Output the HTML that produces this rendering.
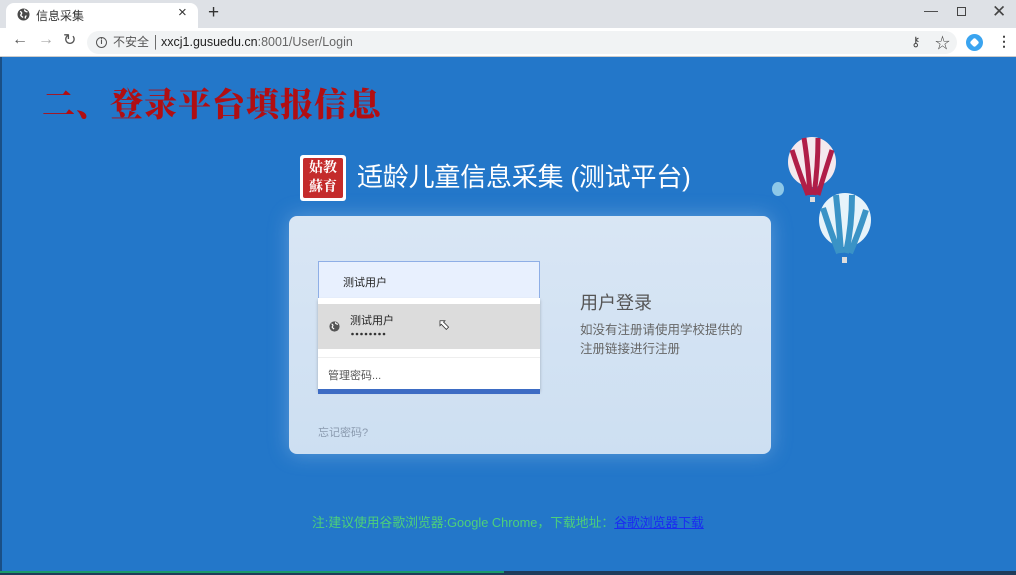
<!DOCTYPE html>
<html><head><meta charset="utf-8"><style>
*{margin:0;padding:0;box-sizing:border-box}
body{width:1016px;height:575px;overflow:hidden;position:relative;font-family:"Liberation Sans","Noto Sans CJK SC",sans-serif;background:#2377c9}
.abs{position:absolute}
</style></head><body>
<!-- tab strip -->
<div class="abs" style="left:0;top:0;width:1016px;height:28px;background:#dee1e6"></div>
<div class="abs" style="left:6px;top:3px;width:192px;height:26px;background:#fff;border-radius:8px 8px 0 0"></div>
<svg class="abs" style="left:17px;top:8px" width="13" height="13" viewBox="0 0 13 13"><circle cx="6.5" cy="6.5" r="6" fill="#4a4a4a"/><path d="M3 3.5c2 .5 2 2 1 3s1 2 2 3M8 1.5c-1 1.5 1 2 2.5 2.5M9.5 8c-1 0-1.5 1-1 2.5" stroke="#fff" stroke-width="1.4" fill="none"/></svg>
<div class="abs" style="left:36px;top:7px;font-size:12px;color:#333">信息采集</div>
<div class="abs" style="left:178px;top:4px;font-size:15px;color:#333">×</div>
<div class="abs" style="left:208px;top:2px;font-size:19px;color:#333">+</div>
<div class="abs" style="left:924px;top:2px;font-size:14px;color:#444">—</div>
<div class="abs" style="left:957px;top:7px;width:9px;height:9px;border:1px solid #444"></div>
<div class="abs" style="left:992px;top:2px;font-size:17px;color:#444">✕</div>
<!-- address bar -->
<div class="abs" style="left:0;top:28px;width:1016px;height:29px;background:#fff;border-bottom:1px solid #ccc"></div>
<div class="abs" style="left:12px;top:31px;font-size:16px;color:#555">←</div>
<div class="abs" style="left:38px;top:31px;font-size:16px;color:#aaa">→</div>
<div class="abs" style="left:63px;top:30px;font-size:16px;color:#555">↻</div>
<div class="abs" style="left:87px;top:31px;width:870px;height:23px;background:#f1f3f4;border-radius:12px"></div>
<div class="abs" style="left:96px;top:37px;width:11px;height:11px;border:1.3px solid #555;border-radius:50%;font-size:8px;line-height:8px;text-align:center;color:#555;font-weight:bold">i</div>
<div class="abs" style="left:113px;top:34px;font-size:12px;line-height:16px;color:#555;white-space:nowrap">不安全 │</div>
<div class="abs" style="left:161px;top:34px;font-size:12.5px;line-height:16px;color:#222">xxcj1.gusuedu.cn<span style="color:#666">:8001/User/Login</span></div>
<div class="abs" style="left:911px;top:34px;font-size:13px;color:#444">⚷</div>
<div class="abs" style="left:935px;top:32px;font-size:15px;color:#444">☆</div>
<div class="abs" style="left:966px;top:34px;width:17px;height:17px;border-radius:50%;background:#3aa4f0"><div style="margin:5px;width:7px;height:7px;background:#fff;border-radius:2px;transform:rotate(45deg)"></div></div>
<div class="abs" style="left:997px;top:33px;font-size:14px;color:#444;font-weight:bold">⋮</div>
<!-- page -->
<div class="abs" style="left:0;top:57px;width:2px;height:518px;background:#1a4f85"></div>
<div class="abs" style="left:0;top:571px;width:1016px;height:4px;background:#1e3b5a"></div>
<div class="abs" style="left:0;top:571px;width:504px;height:2px;background:#1a9a6a"></div>
<div class="abs" style="left:42px;top:84px;font-family:'Noto Serif CJK SC',serif;font-weight:900;font-size:33px;letter-spacing:1px;color:#b10e12;white-space:nowrap;line-height:38px">二、登录平台填报信息</div>
<!-- logo -->
<div class="abs" style="left:300px;top:155px;width:46px;height:46px;background:#fff;border-radius:3px;padding:3px"><div style="width:40px;height:40px;background:#c42b2b;border-radius:2px;color:#fff;font-family:'Noto Serif CJK SC',serif;font-size:14px;line-height:19px;text-align:center;font-weight:bold">姑教<br>蘇育</div></div>
<div class="abs" style="left:357px;top:160px;font-size:26px;color:#fff;white-space:nowrap;line-height:34px;letter-spacing:-0.2px">适龄儿童信息采集 (测试平台)</div>
<!-- balloons -->
<svg class="abs" style="left:770px;top:135px" width="110" height="135" viewBox="0 0 110 135">
<ellipse cx="42" cy="27" rx="24" ry="25" fill="#f4e9ee"/><path d="M22 15q8 25 16 45M34 3q4 25 6 57M48 3q0 28-4 57M62 15q-8 25-14 45" stroke="#b01e48" stroke-width="5" fill="none"/><rect x="40" y="62" width="5" height="5" fill="#ddd"/>
<ellipse cx="75" cy="85" rx="26" ry="27" fill="#e7f3fa"/><path d="M53 73q8 25 16 45M66 60q3 28 5 58M82 60q0 30-6 58M96 75q-8 25-16 43" stroke="#3a93c6" stroke-width="6" fill="none"/><rect x="72" y="122" width="5" height="6" fill="#ddd"/>
<ellipse cx="8" cy="54" rx="6" ry="7" fill="#8dc8e8"/>
</svg>
<!-- card -->
<div class="abs" style="left:289px;top:216px;width:482px;height:238px;border-radius:8px;background:linear-gradient(180deg,#d9e6f4,#cddff2);box-shadow:0 0 20px rgba(200,220,245,.35)"></div>
<div class="abs" style="left:318px;top:261px;width:222px;height:38px;background:#e8f0fe;border:1px solid #8eaee6"></div>
<div class="abs" style="left:343px;top:274px;font-size:11px;color:#222">测试用户</div>
<div class="abs" style="left:318px;top:298px;width:222px;height:92px;background:#fff;box-shadow:0 2px 3px rgba(0,0,0,.25)"></div>
<div class="abs" style="left:318px;top:304px;width:222px;height:45px;background:#dcdcdc"></div>
<svg class="abs" style="left:329px;top:321px" width="11" height="11" viewBox="0 0 13 13"><circle cx="6.5" cy="6.5" r="6" fill="#555"/><path d="M3 3.5c2 .5 2 2 1 3s1 2 2 3M8 1.5c-1 1.5 1 2 2.5 2.5" stroke="#fff" stroke-width="1.4" fill="none"/></svg>
<div class="abs" style="left:350px;top:312px;font-size:11px;color:#222">测试用户</div>
<svg class="abs" style="left:351px;top:332px" width="36" height="4"><g fill="#333"><circle cx="1.5" cy="2" r="1.3"/><circle cx="6" cy="2" r="1.3"/><circle cx="10.5" cy="2" r="1.3"/><circle cx="15" cy="2" r="1.3"/><circle cx="19.5" cy="2" r="1.3"/><circle cx="24" cy="2" r="1.3"/><circle cx="28.5" cy="2" r="1.3"/><circle cx="33" cy="2" r="1.3"/></g></svg>
<div class="abs" style="left:438px;top:316px;font-size:14px;color:#fff;-webkit-text-stroke:0.8px #333">⬉</div>
<div class="abs" style="left:318px;top:357px;width:222px;height:1px;background:#eee"></div>
<div class="abs" style="left:328px;top:367px;font-size:11px;color:#555">管理密码...</div>
<div class="abs" style="left:318px;top:389px;width:222px;height:5px;background:#3d6cc4"></div>
<div class="abs" style="left:318px;top:424px;font-size:11px;color:#8a9aae">忘记密码?</div>
<div class="abs" style="left:580px;top:289px;font-size:18px;color:#555">用户登录</div>
<div class="abs" style="left:580px;top:321px;font-size:12.5px;color:#666;line-height:19px">如没有注册请使用学校提供的<br>注册链接进行注册</div>
<!-- footer -->
<div class="abs" style="left:312px;top:512px;font-size:12.8px;color:#4dd07a;white-space:nowrap">注:建议使用谷歌浏览器:Google Chrome，下载地址：<span style="color:#1a2cf0;text-decoration:underline">谷歌浏览器下载</span></div>
</body></html>
